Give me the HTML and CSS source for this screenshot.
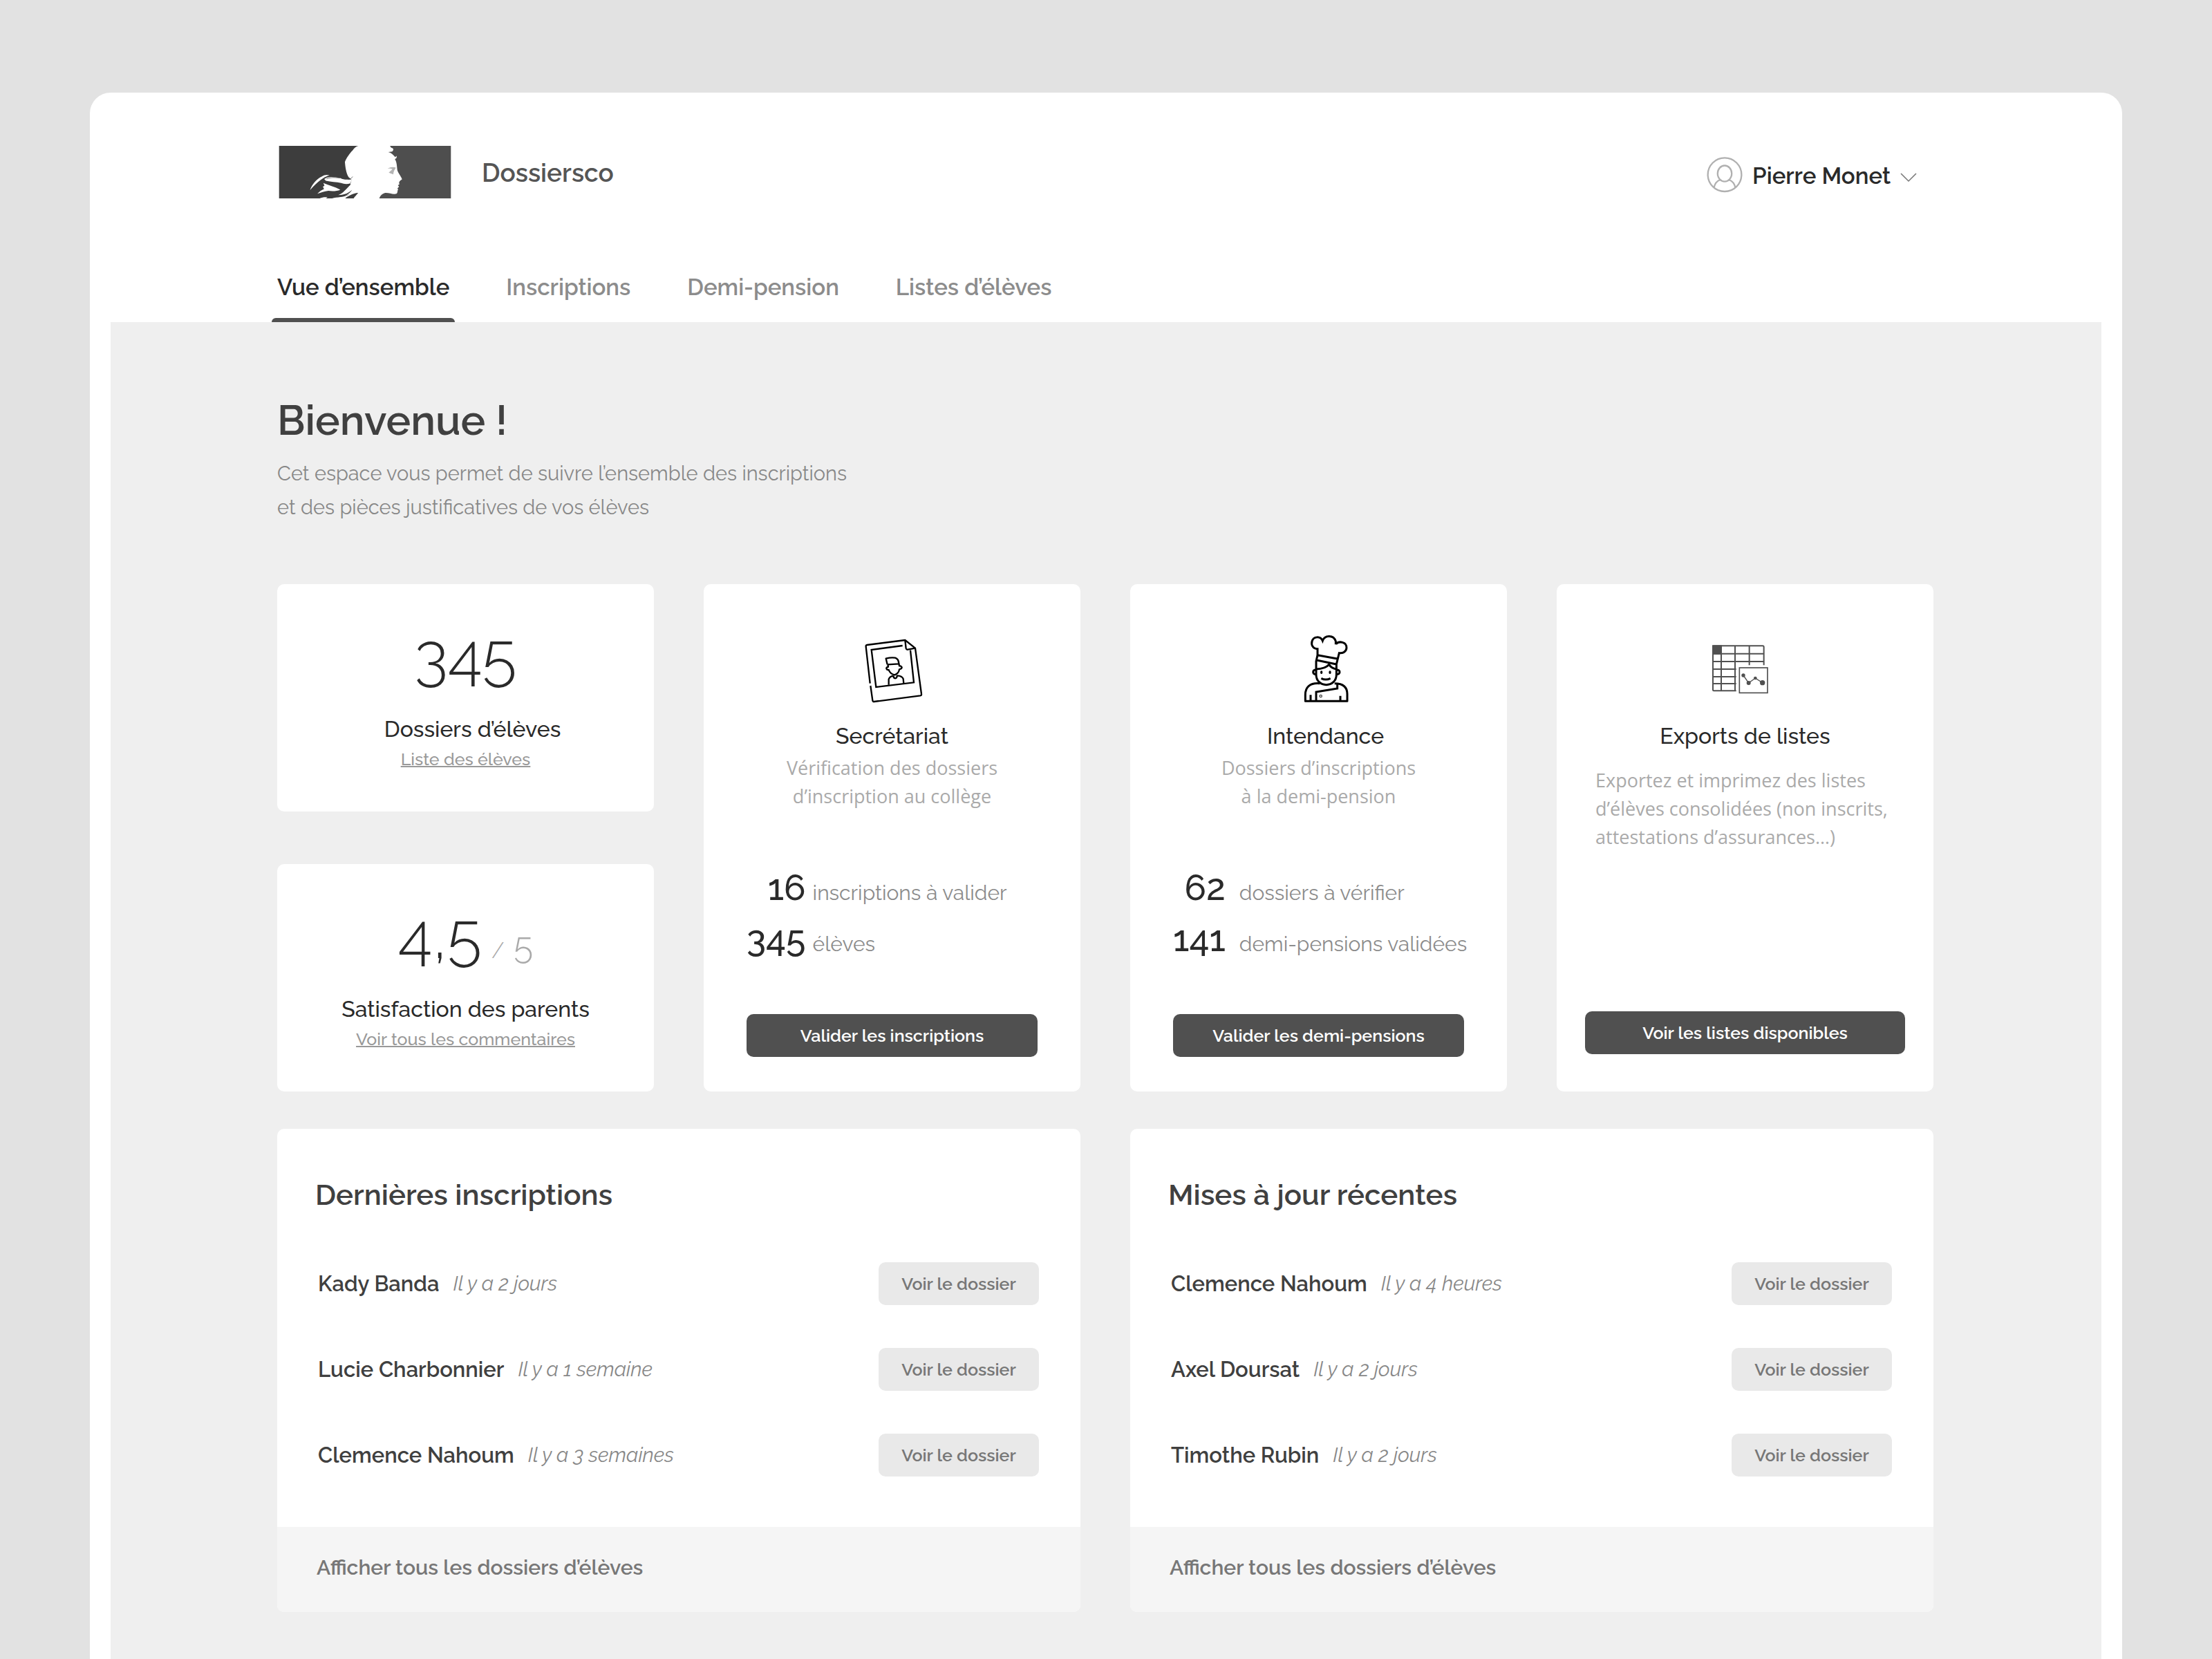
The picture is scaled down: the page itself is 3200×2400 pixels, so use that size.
FILE: index.html
```
<!DOCTYPE html>
<html lang="fr">
<head>
<meta charset="utf-8">
<meta name="viewport" content="width=device-width, initial-scale=1">
<title>Dossiersco – Vue d’ensemble</title>
<link rel="stylesheet" href="styles.css">
</head>
<body>
<div class="panel">
  <header class="header">
    <div class="topbar">
      <svg class="logo" viewBox="3 18 755 229" aria-hidden="true">
        <rect x="9" y="18" width="391" height="229" fill="#3d3d3d"/>
        <rect x="400" y="18" width="358" height="229" fill="#4e4e4e"/>
        <path fill="#fff" d="M355 18C345 20 336 28 331 36C318 50 303 70 296 88C298 112 301 136 312 154L326 166L320 182C322 200 318 212 304 224L335 247H446C450 236 458 226 472 223C490 222 508 232 522 226C527 220 524 213 528 208L525 203L532 196L527 190L534 185C530 178 532 172 545 164C542 152 530 140 525 126C522 110 524 92 514 76L521 71L522 62L515 67C508 57 497 48 485 45L502 43C508 38 509 31 503 28C496 26 494 22 493 18Z"/>
        <path fill="#fff" d="M144 211C152 186 172 162 196 151C206 145 216 142 229 146C206 153 180 170 144 211Z"/>
        <path fill="#fff" d="M206 163C222 148 250 154 276 158C292 168 308 164 328 164L318 182C304 186 290 184 280 180C258 174 236 176 213 170Z"/>
        <path fill="#fff" d="M202 180C224 190 252 196 276 209C262 216 240 216 224 214C206 216 192 222 176 227C184 218 194 210 205 206L200 196L207 192Z"/>
        <path fill="#fff" d="M270 231C288 226 300 206 322 186L345 190L358 222C344 232 330 238 312 247H240C262 240 290 246 322 226C304 236 284 236 266 233Z"/>
        <path fill="#fff" d="M186 247C196 242 208 241 220 242L214 247Z"/>
        <path fill="#3d3d3d" d="M300 244C316 236 330 224 354 223C346 233 338 241 334 247H298Z"/>
        <path fill="#3d3d3d" d="M268 233C296 232 314 222 327 210C318 226 298 238 276 240L240 241Z"/>
        <path fill="none" stroke="#3d3d3d" stroke-width="2" d="M216 162C240 152 258 158 276 158M330 152C324 160 318 164 310 165"/>
        <path fill="#b4b4b4" d="M482 117C494 110 508 109 518 113C515 120 509 124 507 142C499 140 492 137 487 134C493 130 497 126 503 120C496 116 490 116 482 117Z"/>
      </svg>
      <span class="brand">Dossiersco</span>
      <button class="user" type="button">
        <svg class="user-icon" viewBox="82 82 158 158" fill="none" stroke="#b0b0b0" stroke-width="7" aria-hidden="true">
          <circle cx="161" cy="160" r="74"/>
          <ellipse cx="161" cy="155" rx="31" ry="35"/>
          <path d="M114 217C118 199 126 188 140 183M181 183C195 188 204 199 208 217"/>
        </svg>
        <span class="user-name">Pierre Monet</span>
        <svg class="chevron" viewBox="0 0 24 14" fill="none" stroke="#777" stroke-width="1.5" aria-hidden="true"><path d="M1 1L12 12L23 1"/></svg>
      </button>
    </div>
    <nav class="tabs" aria-label="Navigation principale">
      <a class="tab tab-active" href="#" aria-current="page">Vue d’ensemble</a>
      <a class="tab" href="#">Inscriptions</a>
      <a class="tab" href="#">Demi-pension</a>
      <a class="tab" href="#">Listes d’élèves</a>
    </nav>
  </header>

  <main class="main">
    <h1 class="welcome">Bienvenue !</h1>
    <p class="intro">Cet espace vous permet de suivre l’ensemble des inscriptions<br>et des pièces justificatives de vos élèves</p>

    <div class="overview">
      <div class="figures">
        <section class="card figure">
          <p class="figure-value">345</p>
          <h2 class="card-title title-shifted">Dossiers d’élèves</h2>
          <a class="figure-link" href="#">Liste des élèves</a>
        </section>
        <section class="card figure">
          <p class="figure-value">4,5<span class="figure-scale"><span class="slash">/</span> 5</span></p>
          <h2 class="card-title">Satisfaction des parents</h2>
          <a class="figure-link" href="#">Voir tous les commentaires</a>
        </section>
      </div>

      <section class="card service">
        <svg class="service-icon" viewBox="60 54 300 300" fill="none" stroke="#000" stroke-width="7" stroke-linejoin="round" aria-hidden="true">
          <path d="M113 266L95 106Q94 100 100 99L265 78L309 113L336 312Q337 318 331 319L131 345Q125 346 124 340L115 276"/>
          <path d="M265 78L269 114Q271 120 277 119L309 113"/>
          <path d="M254 102L119 120L139 282L303 262L288 122" stroke-linejoin="miter"/>
          <path d="M188 184L182 158Q205 152 222 155Q237 159 238 181L190 184"/>
          <path d="M190 184L192 194Q183 196 184 202Q187 209 194 207Q200 225 220 229Q238 222 240 205Q251 203 251 196Q247 189 240 190L238 180"/>
          <path d="M194 272V248Q198 236 214 233M230 232Q252 233 257 246L259 266M214 232Q214 243 222 244Q231 243 230 230"/>
        </svg>
        <h2 class="card-title">Secrétariat</h2>
        <p class="service-text">Vérification des dossiers<br>d’inscription au collège</p>
        <dl class="counts">
          <dt>16</dt><dd>inscriptions à valider</dd>
          <dt>345</dt><dd>élèves</dd>
        </dl>
        <button class="action" type="button">Valider les inscriptions</button>
      </section>

      <section class="card service">
        <svg class="service-icon title-shifted" viewBox="52 54 300 300" fill="none" stroke="#000" stroke-width="9" stroke-linejoin="round" aria-hidden="true">
          <path d="M166 146V116C145 116 138 98 142 84C148 60 179 60 188 81C197 55 236 54 245 83V97M246 95C260 80 293 86 292 112C290 131 273 136 260 134L248 183V228C248 255 228 272 204 272C180 272 160 255 160 228V170L166 143L252 159M162 165L248 183" stroke-linejoin="miter"/>
          <path d="M160 204Q200 203 216 184Q226 200 248 204"/>
          <path d="M160 207Q147 207 147 217Q147 227 160 227M248 207Q262 207 262 217Q262 227 248 227"/>
          <path d="M182 244Q202 254 222 244"/>
          <path d="M176 266C130 262 113 285 113 315V343H295V312C295 285 280 266 240 266"/>
          <path d="M252 266V288L160 303V343M136 343V316M265 343V320" stroke-linejoin="miter"/>
          <ellipse cx="183" cy="218" rx="5" ry="7" fill="#000" stroke="none"/>
          <ellipse cx="220" cy="218" rx="5" ry="7" fill="#000" stroke="none"/>
          <circle cx="180" cy="321" r="5" stroke-width="4" stroke="#444"/>
        </svg>
        <h2 class="card-title title-shifted">Intendance</h2>
        <p class="service-text">Dossiers d’inscriptions<br>à la demi-pension</p>
        <dl class="counts counts-wide">
          <dt>62</dt><dd>dossiers à vérifier</dd>
          <dt>141</dt><dd>demi-pensions validées</dd>
        </dl>
        <button class="action" type="button">Valider les demi-pensions</button>
      </section>

      <section class="card service service-exports">
        <svg class="service-icon" viewBox="73 24 300 300" fill="none" stroke="#505050" stroke-width="6" aria-hidden="true">
          <path d="M183 268H86Q82 268 82 264V77Q82 73 86 73H298Q303 73 303 78V157"/>
          <path d="M118 73V268M178 73V268M240 73V157M82 107H303M82 141H303M82 174H183M82 207H183M82 237H183"/>
          <path d="M82 73H118V107H82Z" fill="#505050"/>
          <rect x="197" y="168" width="122" height="109" fill="#fff" stroke-width="5"/>
          <path d="M214 201L237 234L266 213L297 233" stroke-width="4"/>
          <g fill="#505050" stroke="none"><circle cx="214" cy="201" r="8"/><circle cx="237" cy="234" r="9"/><circle cx="266" cy="213" r="7"/><circle cx="297" cy="233" r="11"/></g>
        </svg>
        <h2 class="card-title">Exports de listes</h2>
        <p class="service-text">Exportez et imprimez des listes d’élèves consolidées (non inscrits, attestations d’assurances…)</p>
        <button class="action" type="button">Voir les listes disponibles</button>
      </section>
    </div>

    <div class="activity">
      <section class="card feed">
        <h2 class="feed-title">Dernières inscriptions</h2>
        <ul class="feed-list">
          <li class="feed-row"><span class="name">Kady Banda</span><em class="when">Il y a 2 jours</em><button class="open" type="button">Voir le dossier</button></li>
          <li class="feed-row"><span class="name">Lucie Charbonnier</span><em class="when">Il y a 1 semaine</em><button class="open" type="button">Voir le dossier</button></li>
          <li class="feed-row"><span class="name">Clemence Nahoum</span><em class="when">Il y a 3 semaines</em><button class="open" type="button">Voir le dossier</button></li>
        </ul>
        <a class="feed-more" href="#">Afficher tous les dossiers d’élèves</a>
      </section>
      <section class="card feed">
        <h2 class="feed-title">Mises à jour récentes</h2>
        <ul class="feed-list">
          <li class="feed-row"><span class="name">Clemence Nahoum</span><em class="when">Il y a 4 heures</em><button class="open" type="button">Voir le dossier</button></li>
          <li class="feed-row"><span class="name">Axel Doursat</span><em class="when">Il y a 2 jours</em><button class="open" type="button">Voir le dossier</button></li>
          <li class="feed-row"><span class="name">Timothe Rubin</span><em class="when">Il y a 2 jours</em><button class="open" type="button">Voir le dossier</button></li>
        </ul>
        <a class="feed-more" href="#">Afficher tous les dossiers d’élèves</a>
      </section>
    </div>
  </main>
</div>
</body>
</html>
```
FILE: styles.css
```
*,
*::before,
*::after {
  box-sizing: border-box;
}

body {
  margin: 0;
  min-height: 100vh;
  display: flex;
  flex-direction: column;
  background: #e2e2e2;
  color: #2a2a2a;
  font-family: Raleway, "Open Sans", sans-serif;
}

h1, h2, p, ul, dl, dd {
  margin: 0;
  padding: 0;
}

button {
  border: 0;
  padding: 0;
  background: none;
  color: inherit;
  font: inherit;
  cursor: pointer;
}

a {
  color: inherit;
  text-decoration: none;
}

.panel {
  flex: 1;
  display: flex;
  flex-direction: column;
  margin: 134px 130px 0;
  padding: 0 30px;
  border-radius: 30px 30px 0 0;
  background: #fff;
}

/* Header */

.header {
  padding: 77px 243px 0 241px;
}

.topbar {
  display: flex;
  align-items: center;
}

.logo {
  width: 252px;
  height: 76px;
}

.brand {
  margin-left: 44px;
  padding-top: 2px;
  font-size: 37px;
  font-weight: 600;
  line-height: 48px;
  color: #555;
}

.user {
  display: flex;
  align-items: center;
  margin: 8px 24px 0 auto;
  font-size: 33px;
  font-weight: 600;
  line-height: 48px;
}

.user-icon {
  width: 52px;
  height: 52px;
  margin-right: 14px;
}

.user-name {
  padding-top: 4px;
}

.chevron {
  width: 24px;
  height: 14px;
  margin: 8px 0 0 14px;
}

.tabs {
  display: flex;
  gap: 82px;
  margin-top: 105px;
}

.tab {
  position: relative;
  padding-bottom: 26px;
  font-size: 33px;
  font-weight: 600;
  line-height: 48px;
  color: #8c8c8c;
}

.tab-active {
  color: #2a2a2a;
}

.tab-active::after {
  content: "";
  position: absolute;
  left: -8px;
  right: -8px;
  bottom: 0;
  height: 6px;
  border-radius: 6px 6px 0 0;
  background: #505050;
}

/* Content */

.main {
  flex: 1;
  padding: 106px 243px 68px 241px;
  background: #efefef;
}

.welcome {
  font-size: 60px;
  font-weight: 600;
  line-height: 72px;
  color: #404040;
}

.intro {
  margin-top: 17px;
  font-size: 29px;
  font-weight: 400;
  line-height: 49px;
  color: #888;
}

.card {
  display: flex;
  flex-direction: column;
  border-radius: 10px;
  background: #fff;
}

.card-title {
  font-size: 32px;
  font-weight: 500;
  line-height: 46px;
}

.title-shifted {
  margin-left: 20px;
}

.overview {
  display: grid;
  grid-template-columns: repeat(4, minmax(0, 1fr));
  gap: 72px;
  margin-top: 86px;
}

.figures {
  display: flex;
  flex-direction: column;
  gap: 76px;
}

.figure {
  flex: 1;
  align-items: center;
  padding: 38px 20px 54px;
}

.figure-value {
  margin-bottom: 17px;
  font-size: 92px;
  font-weight: 300;
  line-height: 132px;
}

.figure-scale {
  margin-left: 14px;
  font-size: 52px;
  line-height: 60px;
  color: #aaa;
}

.slash {
  font-size: 32px;
}

.figure-link {
  font-size: 25px;
  font-weight: 500;
  line-height: 40px;
  color: #999;
  text-decoration: underline;
  text-decoration-thickness: 2px;
  text-underline-offset: 1px;
}

.service {
  align-items: center;
  padding: 73px 62px 50px;
}

.service-icon {
  width: 100px;
  height: 100px;
  margin-bottom: 24px;
}

.service-text {
  margin-top: 2px;
  font-family: "Open Sans", sans-serif;
  font-size: 27px;
  font-weight: 400;
  line-height: 41px;
  text-align: center;
  color: #aaa;
}

.counts {
  align-self: stretch;
  display: grid;
  grid-template-columns: auto 1fr;
  column-gap: 10px;
  align-items: baseline;
  margin: 75px 0 72px;
  white-space: nowrap;
}

.counts-wide {
  column-gap: 20px;
}

.counts dt {
  font-size: 52px;
  font-weight: 500;
  line-height: 74px;
  text-align: right;
}

.counts dd {
  font-size: 30px;
  line-height: 40px;
  color: #8c8c8c;
}

.action {
  align-self: stretch;
  height: 62px;
  margin-top: auto;
  border-radius: 10px;
  background: #505050;
  font-size: 25px;
  font-weight: 600;
  color: #fff;
}

.service-exports {
  padding: 73px 41px 54px;
}

.service-exports .service-text {
  margin: 20px 0 0 15px;
  text-align: left;
}

/* Recent activity */

.activity {
  display: grid;
  grid-template-columns: repeat(2, minmax(0, 1fr));
  gap: 72px;
  margin-top: 54px;
}

.feed {
  overflow: hidden;
}

.feed-title {
  padding: 68px 55px 0;
  font-size: 42px;
  font-weight: 600;
  line-height: 56px;
  color: #404040;
}

.feed-list {
  display: grid;
  gap: 62px;
  padding: 69px 60px 73px 59px;
  list-style: none;
}

.feed-row {
  display: flex;
  align-items: center;
}

.name {
  font-size: 31px;
  font-weight: 600;
  color: #404040;
}

.when {
  margin-left: 20px;
  font-size: 29px;
  font-weight: 400;
  color: #888;
}

.open {
  width: 232px;
  height: 62px;
  margin-left: auto;
  border-radius: 10px;
  background: #e9e9e9;
  font-size: 25px;
  font-weight: 600;
  color: #777;
}

.feed-more {
  padding: 39px 57px 44px;
  background: #f5f5f5;
  font-size: 30px;
  font-weight: 600;
  line-height: 40px;
  color: #777;
}
```
